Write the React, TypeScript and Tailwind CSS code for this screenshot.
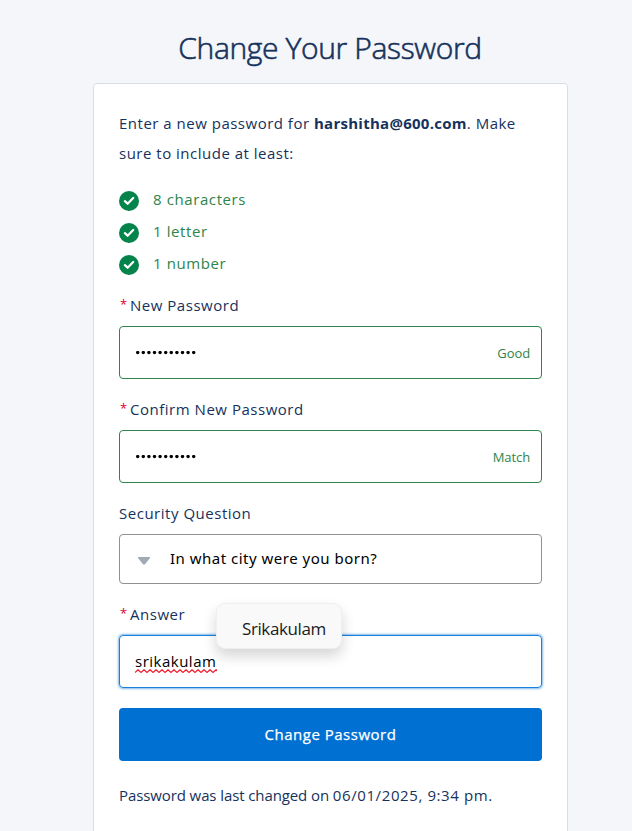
import type { ReactNode } from "react";

function Check() {
  return (
    <svg width="20" height="20" viewBox="0 0 20 20" className="mt-[2px] shrink-0">
      <circle cx="10" cy="10" r="10" fill="#04844b" />
      <path d="M5.9 10.2 L8.6 12.7 L14.2 7" fill="none" stroke="#fff" strokeWidth="2.3" strokeLinecap="round" strokeLinejoin="round" />
    </svg>
  );
}

function Label({ children, required }: { children: ReactNode; required?: boolean }) {
  return (
    <div className="flex h-[24px] items-center whitespace-pre text-[15px] tracking-[0.52px] text-[#16325c]">
      {required && <span className="w-[11px] pl-px text-[13px] text-[#e2002f]">*</span>}
      <span>{children}</span>
    </div>
  );
}

function Dots() {
  return (
    <svg width="62" height="4" viewBox="0 0 62 4">
      {Array.from({ length: 11 }, (_, i) => (
        <circle key={i} cx={2.7 + i * 5.6} cy="1.6" r="1.7" fill="#000" />
      ))}
    </svg>
  );
}

function PasswordField({ status }: { status: string }) {
  return (
    <div className="flex h-[53px] items-center justify-between rounded-[4px] border border-[#2e844a] pl-[15px] pr-[11px]">
      <Dots />
      <span className="pt-[2px] text-[13px] tracking-[-0.1px] text-[#2e844a]">{status}</span>
    </div>
  );
}

const squiggle =
  "M0 3.5" + Array.from({ length: 14 }, (_, i) => `L${i * 6 + 3} 0.8L${i * 6 + 6} 3.5`).join("");

export default function App() {
  return (
    <div className="h-[831px] w-[632px] overflow-hidden bg-[#f4f6fa] font-['Open_Sans','Noto_Sans',sans-serif] text-[#16325c]">
      <h1 className="flex h-[83px] items-center justify-center pl-[28px] pt-[12px] text-[30px] font-light tracking-[-0.36px] [-webkit-text-stroke:0.6px_#16325c]">
        Change Your Password
      </h1>
      <main className="ml-[93px] h-[800px] w-[475px] rounded-[4px] border border-[#d8dde6] bg-white px-[25px] pt-[24px]">
        <p className="whitespace-nowrap text-[15px] leading-[30px] tracking-[0.5px]">
          Enter a new password for <strong className="font-bold tracking-[0.27px]">harshitha@600.com</strong>. Make
          <br />
          sure to include at least:
        </p>
        <ul className="mt-[21px] text-[15px] tracking-[0.6px] text-[#2e844a]">
          {["8 characters", "1 letter", "1 number"].map((rule) => (
            <li key={rule} className="flex h-[32px] gap-[14px] leading-[20px]">
              <Check />
              <span>{rule}</span>
            </li>
          ))}
        </ul>
        <div className="mt-[8px]">
          <Label required>New Password</Label>
        </div>
        <div className="mt-[9px]">
          <PasswordField status="Good" />
        </div>
        <div className="mt-[18px]">
          <Label required>Confirm New Password</Label>
        </div>
        <div className="mt-[9px]">
          <PasswordField status="Match" />
        </div>
        <div className="mt-[18px]">
          <Label>Security Question</Label>
        </div>
        <div className="mt-[9px] flex h-[50px] items-center rounded-[4px] border border-[#919191] pl-[18px] text-[15px] tracking-[0.5px] text-black">
          <svg width="12" height="8" viewBox="0 0 12 8" className="mt-[3px]">
            <path d="M0 0H12V1L6.8 7.5H5.2L0 1Z" fill="#a0a9b4" />
          </svg>
          <span className="ml-[20px] pb-[2px] font-['Noto_Sans',sans-serif]">In what city were you born?</span>
        </div>
        <div className="relative mt-[18px]">
          <Label required>Answer</Label>
          <div className="absolute left-[97px] top-[1px] flex h-[46px] w-[126px] items-center rounded-[9px] border border-[#efefef] bg-[#f9f9f9] pl-[25px] pt-[5px] text-[17px] tracking-[-0.4px] text-[#1b1b1b] shadow-[0_7px_14px_rgba(0,0,0,0.17)]">
            Srikakulam
          </div>
        </div>
        <div className="mt-[9px] flex h-[53px] items-center rounded-[4px] border border-[#1b7fdc] pl-[15px] text-[15px] tracking-[0.5px] text-black shadow-[0_0_3px_#0070d2]">
          <span className="relative">
            srikakulam
            <svg width="82" height="5" viewBox="0 0 82 5" className="absolute -bottom-px left-0">
              <path d={squiggle} fill="none" stroke="#f02030" strokeWidth="1.3" />
            </svg>
          </span>
        </div>
        <button className="mt-[20px] block h-[53px] w-full rounded-[4px] bg-[#0070d2] text-[15px] font-medium tracking-[0.5px] text-white [-webkit-text-stroke:0.25px_white]">
          Change Password
        </button>
        <p className="mt-[22px] whitespace-nowrap text-[15px] leading-[24px] tracking-[-0.1px]">
          Password was last changed on <span className="tracking-[0.6px]">06/01/2025, 9:34 pm.</span>
        </p>
      </main>
    </div>
  );
}
